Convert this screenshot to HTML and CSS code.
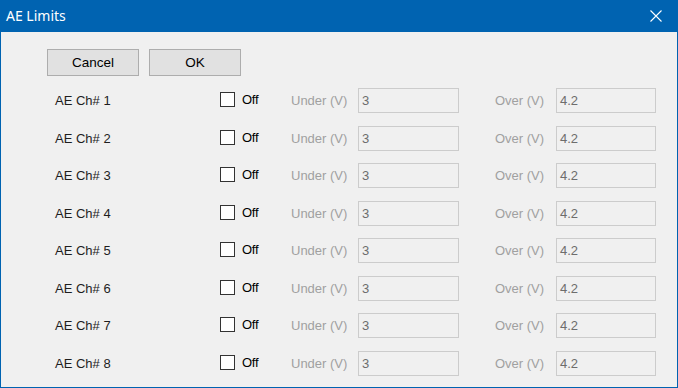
FILE: index.html
```html
<!DOCTYPE html>
<html>
<head>
<meta charset="utf-8">
<title>AE Limits</title>
<link rel="stylesheet" href="styles.css">
</head>
<body>
<div class="window">
  <div class="titlebar">
    <span class="title">AE Limits</span>
    <svg class="close" width="12" height="12" viewBox="0 0 12 12"><path d="M0.5 0.5 L11.5 11.5 M11.5 0.5 L0.5 11.5" stroke="#ffffff" stroke-width="1.1" fill="none"/></svg>
  </div>
  <div class="content">
    <div class="buttons">
      <button class="btn">Cancel</button>
      <button class="btn">OK</button>
    </div>
    <div class="rows">
      <div class="row"><span class="ch">AE Ch# 1</span><span class="box"></span><span class="off">Off</span><span class="lbl under">Under (V)</span><span class="field f1">3</span><span class="lbl over">Over (V)</span><span class="field f2">4.2</span></div>
      <div class="row"><span class="ch">AE Ch# 2</span><span class="box"></span><span class="off">Off</span><span class="lbl under">Under (V)</span><span class="field f1">3</span><span class="lbl over">Over (V)</span><span class="field f2">4.2</span></div>
      <div class="row"><span class="ch">AE Ch# 3</span><span class="box"></span><span class="off">Off</span><span class="lbl under">Under (V)</span><span class="field f1">3</span><span class="lbl over">Over (V)</span><span class="field f2">4.2</span></div>
      <div class="row"><span class="ch">AE Ch# 4</span><span class="box"></span><span class="off">Off</span><span class="lbl under">Under (V)</span><span class="field f1">3</span><span class="lbl over">Over (V)</span><span class="field f2">4.2</span></div>
      <div class="row"><span class="ch">AE Ch# 5</span><span class="box"></span><span class="off">Off</span><span class="lbl under">Under (V)</span><span class="field f1">3</span><span class="lbl over">Over (V)</span><span class="field f2">4.2</span></div>
      <div class="row"><span class="ch">AE Ch# 6</span><span class="box"></span><span class="off">Off</span><span class="lbl under">Under (V)</span><span class="field f1">3</span><span class="lbl over">Over (V)</span><span class="field f2">4.2</span></div>
      <div class="row"><span class="ch">AE Ch# 7</span><span class="box"></span><span class="off">Off</span><span class="lbl under">Under (V)</span><span class="field f1">3</span><span class="lbl over">Over (V)</span><span class="field f2">4.2</span></div>
      <div class="row"><span class="ch">AE Ch# 8</span><span class="box"></span><span class="off">Off</span><span class="lbl under">Under (V)</span><span class="field f1">3</span><span class="lbl over">Over (V)</span><span class="field f2">4.2</span></div>
    </div>
  </div>
</div>
</body>
</html>
```

FILE: styles.css
```css
html, body {
  margin: 0;
  padding: 0;
  background: #f0f0f0;
}
.window {
  width: 678px;
  height: 388px;
  box-sizing: border-box;
  border: 1px solid #0063b1;
  border-top: none;
  background: #f0f0f0;
  display: flex;
  flex-direction: column;
  font-family: "Liberation Sans", Arial, sans-serif;
  font-size: 13px;
  color: #1e1e1e;
}
.titlebar {
  height: 32px;
  margin: 0 -1px;
  background: #0063b1;
  display: flex;
  align-items: center;
  justify-content: space-between;
  padding: 0 16px 0 6px;
  box-sizing: border-box;
}
.title {
  font-family: "Noto Sans", "Open Sans", sans-serif;
  font-size: 14px;
  color: #ffffff;
  margin-top: -1px;
}
.close {
  display: block;
}
.content {
  padding: 17px 0 0 46px;
  display: flex;
  flex-direction: column;
}
.buttons {
  display: flex;
  gap: 10px;
}
.btn {
  width: 92px;
  height: 27px;
  box-sizing: border-box;
  border: 1px solid #adadad;
  background: #e1e1e1;
  font-family: "Liberation Sans", Arial, sans-serif;
  font-size: 13.5px;
  color: #000;
  padding: 0;
  margin: 0;
}
.rows {
  margin-top: 12px;
  display: flex;
  flex-direction: column;
  gap: 12.5px;
}
.row {
  height: 25px;
  display: flex;
  align-items: center;
}
.row > * {
  flex-shrink: 0;
}
.ch {
  width: 173px;
  padding-left: 8px;
  box-sizing: border-box;
  color: #1e1e1e;
}
.box {
  width: 15px;
  height: 15px;
  box-sizing: border-box;
  border: 1px solid #333333;
  background: #ffffff;
  margin-top: -2px;
}
.off {
  width: 49px;
  padding-left: 7px;
  color: #000;
  letter-spacing: -0.3px;
  margin-top: -2px;
}
.lbl {
  color: #a0a0a0;
}
.under { width: 67px; }
.over { width: 61px; }
.field {
  height: 25px;
  box-sizing: border-box;
  border: 1px solid #cccccc;
  background: #f0f0f0;
  color: #6d6d6d;
  padding: 3px 0 0 3px;
  line-height: 17px;
}
.f1 { width: 101px; margin-right: 36px; }
.f2 { width: 100px; }
```
